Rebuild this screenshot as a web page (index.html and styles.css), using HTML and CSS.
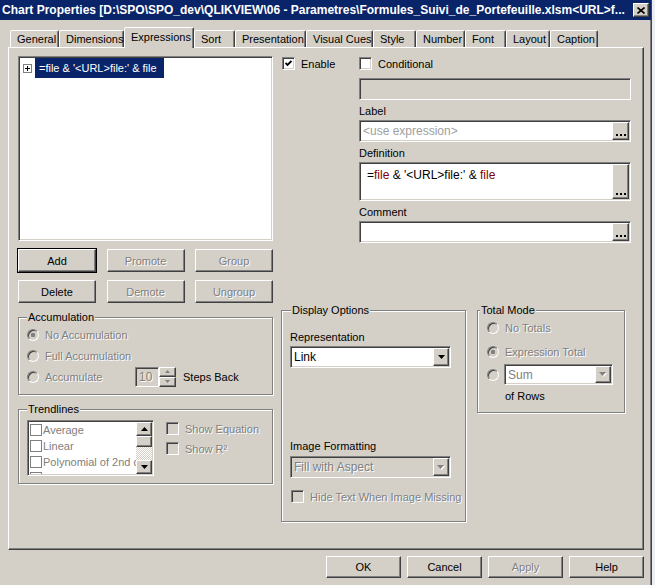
FILE: index.html
```html
<!DOCTYPE html>
<html lang="en">
<head>
  <meta charset="UTF-8" />
  <title>Chart Properties</title>
  <link rel="stylesheet" href="styles.css">
</head>
<body>

  <div class="dialog">
    <div class="titlebar">
      <span class="title">Chart Properties [D:\SPO\SPO_dev\QLIKVIEW\06 - Parametres\Formules_Suivi_de_Portefeuille.xlsm&lt;URL&gt;f...</span>
      <span class="close">
        <svg width="8" height="7" viewBox="0 0 8 7"><path d="M0.5 0.5L7.5 6.5M7.5 0.5L0.5 6.5" stroke="#000" stroke-width="1.6"/></svg>
      </span>
    </div>

    <div class="tabs">
      <div class="tab" style="width:49px">General</div>
      <div class="tab" style="width:65px">Dimensions</div>
      <div class="tab active" style="width:70px">Expressions</div>
      <div class="tab" style="width:41px">Sort</div>
      <div class="tab" style="width:71px">Presentation</div>
      <div class="tab" style="width:67px">Visual Cues</div>
      <div class="tab" style="width:43px">Style</div>
      <div class="tab" style="width:49px">Number</div>
      <div class="tab" style="width:41px">Font</div>
      <div class="tab" style="width:44px">Layout</div>
      <div class="tab" style="width:48px">Caption</div>
    </div>

    <div class="panel">
      <div class="left">
        <div class="tree sunken">
          <div class="tree-row">
            <span class="expander">
              <svg width="7" height="7" viewBox="0 0 7 7"><path d="M1 3.5H6M3.5 1V6" stroke="#000" stroke-width="1"/></svg>
            </span>
            <span class="tree-sel">=file &amp; '&lt;URL&gt;file:' &amp; file</span>
          </div>
        </div>

        <div class="btn-row">
          <button class="btn default">Add</button>
          <button class="btn" disabled>Promote</button>
          <button class="btn" disabled>Group</button>
        </div>
        <div class="btn-row">
          <button class="btn">Delete</button>
          <button class="btn" disabled>Demote</button>
          <button class="btn" disabled>Ungroup</button>
        </div>

        <div class="group accum">
          <div class="group-title">Accumulation</div>
          <div class="radio-row"><span class="radio off dot"></span><span class="dis">No Accumulation</span></div>
          <div class="radio-row"><span class="radio off"></span><span class="dis">Full Accumulation</span></div>
          <div class="radio-row">
            <span class="accum-label"><span class="radio off"></span><span class="dis">Accumulate</span></span>
            <span class="spin">
              <span class="spin-field sunken dis">10</span>
              <span class="spin-btns">
                <span class="spin-btn"><svg width="5" height="3" viewBox="0 0 5 3"><path d="M2.5 0L5 3H0z" fill="#808080"/></svg></span>
                <span class="spin-btn"><svg width="5" height="3" viewBox="0 0 5 3"><path d="M0 0H5L2.5 3z" fill="#808080"/></svg></span>
              </span>
            </span>
            <span class="steps">Steps Back</span>
          </div>
        </div>

        <div class="group trend">
          <div class="group-title">Trendlines</div>
          <div class="trend-body">
            <div class="tlist sunken">
              <div class="tl-items">
                <div class="tl-item"><span class="flatbox"></span>Average</div>
                <div class="tl-item"><span class="flatbox"></span>Linear</div>
                <div class="tl-item"><span class="flatbox"></span>Polynomial of 2nd degree</div>
                <div class="tl-item"><span class="flatbox"></span>Polynomial of 3rd degree</div>
              </div>
              <div class="scrollbar">
                <span class="sb-btn"><svg width="7" height="4" viewBox="0 0 7 4"><path d="M3.5 0L7 4H0z"/></svg></span>
                <span class="sb-thumb"></span>
                <span class="sb-track"></span>
                <span class="sb-btn"><svg width="7" height="4" viewBox="0 0 7 4"><path d="M0 0H7L3.5 4z"/></svg></span>
              </div>
            </div>
            <div class="trend-checks">
              <div class="check-row"><span class="box off"></span><span class="dis">Show Equation</span></div>
              <div class="check-row"><span class="box off"></span><span class="dis">Show R²</span></div>
            </div>
          </div>
        </div>
      </div>

      <div class="right">
        <div class="expr-top">
          <div class="enable-col">
            <div class="check-row">
              <span class="box"><svg width="7" height="7" viewBox="0 0 7 7"><path d="M0.5 3L2.5 5L6.5 1" stroke="#000" stroke-width="1.8" fill="none"/></svg></span>
              <span>Enable</span>
            </div>
          </div>
          <div class="fields">
            <div class="check-row"><span class="box"></span><span>Conditional</span></div>
            <div class="field sunken off cond"></div>
            <div class="caption">Label</div>
            <div class="field sunken">
              <span class="field-text placeholder">&lt;use expression&gt;</span>
              <span class="dots"><svg width="10" height="2" viewBox="0 0 10 2"><path d="M0 0h2v2H0zM4 0h2v2H4zM8 0h2v2H8z"/></svg></span>
            </div>
            <div class="caption">Definition</div>
            <div class="field sunken tall">
              <span class="field-text def">=<span class="kw">file</span> &amp; '&lt;URL&gt;file:' &amp; <span class="kw">file</span></span>
              <span class="dots"><svg width="10" height="2" viewBox="0 0 10 2"><path d="M0 0h2v2H0zM4 0h2v2H4zM8 0h2v2H8z"/></svg></span>
            </div>
            <div class="caption">Comment</div>
            <div class="field sunken">
              <span class="field-text"></span>
              <span class="dots"><svg width="10" height="2" viewBox="0 0 10 2"><path d="M0 0h2v2H0zM4 0h2v2H4zM8 0h2v2H8z"/></svg></span>
            </div>
          </div>
        </div>

        <div class="options">
          <div class="group display">
            <div class="group-title">Display Options</div>
            <div class="caption rep">Representation</div>
            <div class="combo sunken">
              <span class="combo-text">Link</span>
              <span class="combo-btn"><svg width="7" height="4" viewBox="0 0 7 4"><path d="M0 0H7L3.5 4z"/></svg></span>
            </div>
            <div class="caption img">Image Formatting</div>
            <div class="combo sunken off">
              <span class="combo-text dis">Fill with Aspect</span>
              <span class="combo-btn"><svg width="8" height="5" viewBox="0 0 8 5"><path d="M1 1H8L4.5 5z" fill="#fff"/><path d="M0 0H7L3.5 4z" fill="#808080"/></svg></span>
            </div>
            <div class="check-row hide-text"><span class="box off"></span><span class="dis">Hide Text When Image Missing</span></div>
          </div>

          <div class="group totals">
            <div class="group-title">Total Mode</div>
            <div class="radio-row small first"><span class="radio off"></span><span class="dis">No Totals</span></div>
            <div class="radio-row small second"><span class="radio off dot"></span><span class="dis">Expression Total</span></div>
            <div class="radio-row third">
              <span class="radio off"></span>
              <div class="combo sunken sum">
                <span class="combo-text dis">Sum</span>
                <span class="combo-btn"><svg width="8" height="5" viewBox="0 0 8 5"><path d="M1 1H8L4.5 5z" fill="#fff"/><path d="M0 0H7L3.5 4z" fill="#808080"/></svg></span>
              </div>
            </div>
            <div class="of-rows">of Rows</div>
          </div>
        </div>
      </div>
    </div>

    <div class="footer">
      <button class="btn wide">OK</button>
      <button class="btn wide">Cancel</button>
      <button class="btn wide" disabled>Apply</button>
      <button class="btn wide">Help</button>
    </div>
  </div>

</body>
</html>
```

FILE: styles.css
```css
* {
  box-sizing: border-box;
}
body {
  margin: 0;
  background: #eceef2;
  font-family: "Liberation Sans", Arial, sans-serif;
  font-size: 11px;
  color: #000;
}
.dialog {
  width: 652px;
  height: 585px;
  background: #d4d0c8;
  border-right: 1px solid #404040;
  box-shadow: inset -1px 0 #808080;
  overflow: hidden;
}

/* title bar */
.titlebar {
  height: 20px;
  background: #0a246a;
  display: flex;
  align-items: center;
  justify-content: space-between;
  padding: 0 2px 0 2px;
}
.title {
  color: #fff;
  font-weight: bold;
  font-size: 12px;
  white-space: nowrap;
  overflow: hidden;
}
.close {
  flex: none;
  width: 16px;
  height: 14px;
  margin-left: 6px;
  background: #d4d0c8;
  border: 1px solid;
  border-color: #fff #404040 #404040 #fff;
  box-shadow: inset -1px -1px #808080;
  display: flex;
  align-items: center;
  justify-content: center;
}

/* common 3d looks */
.sunken {
  border: 1px solid;
  border-color: #808080 #fff #fff #808080;
  box-shadow: inset 1px 1px #404040, inset -1px -1px #d4d0c8;
  background: #fff;
  padding: 1px;
}
.off {
  background-color: #d4d0c8;
}
.dis {
  color: #808080;
  text-shadow: 1px 1px 0 #fff;
}
.btn {
  width: 78px;
  height: 23px;
  padding: 0;
  font-family: "Liberation Sans", Arial, sans-serif;
  font-size: 11px;
  font-weight: normal;
  color: #000;
  background: #d4d0c8;
  border: 1px solid;
  border-color: #fff #404040 #404040 #fff;
  box-shadow: inset -1px -1px #808080;
}
.btn:disabled {
  color: #808080;
  text-shadow: 1px 1px 0 #fff;
}
.btn.default {
  outline: 1px solid #000;
}

/* tabs */
.tabs {
  display: flex;
  align-items: flex-end;
  height: 20px;
  margin-top: 7px;
  padding-left: 10px;
  position: relative;
  z-index: 1;
}
.tab {
  flex: none;
  height: 17px;
  padding: 2px 0 0 6px;
  line-height: 13px;
  border: 1px solid;
  border-bottom: none;
  border-color: #fff #404040 transparent #fff;
  box-shadow: inset -1px 0 #808080;
  border-radius: 2px 2px 0 0;
  background: #d4d0c8;
  white-space: nowrap;
}
.tab.active {
  height: 21px;
  margin-bottom: -1px;
  padding-top: 3px;
}

/* panel */
.panel {
  width: 636px;
  height: 503px;
  margin-left: 8px;
  padding-left: 9px;
  display: flex;
  gap: 8px;
  border: 1px solid;
  border-color: #fff #404040 #404040 #fff;
  box-shadow: inset -1px -1px #808080;
}
.left {
  width: 255px;
}

.tree {
  height: 185px;
  margin-top: 8px;
  padding: 1px 0 0 4px;
}
.tree-row {
  display: flex;
  align-items: center;
  height: 20px;
}
.expander {
  width: 9px;
  height: 9px;
  margin-right: 3px;
  border: 1px solid #808080;
  background: #fff;
  display: flex;
  align-items: center;
  justify-content: center;
}
.tree-sel {
  height: 20px;
  line-height: 20px;
  padding: 0 7px 0 4px;
  background: #0a246a;
  color: #fff;
}

.btn-row {
  display: flex;
  justify-content: space-between;
  margin-top: 8px;
}

/* group boxes */
.group {
  border: 1px solid #808080;
  box-shadow: inset 1px 1px #fff, 1px 1px #fff;
  padding: 0 8px;
}
.group-title {
  width: fit-content;
  height: 14px;
  line-height: 14px;
  margin: -8px 0 0 0;
  padding: 0 1px;
  background: #d4d0c8;
}
.accum {
  height: 78px;
  margin-top: 14px;
}
.accum .radio-row:first-of-type {
  margin-top: 3px;
}
.radio-row {
  display: flex;
  align-items: center;
  gap: 6px;
  height: 21px;
  white-space: nowrap;
}
.radio {
  flex: none;
  width: 12px;
  height: 12px;
  border-radius: 50%;
  border: 1px solid;
  border-color: #808080 #fff #fff #808080;
  box-shadow: inset 1px 1px #404040, inset -1px -1px #d4d0c8;
  background: #fff;
}
.radio.off {
  background: #d4d0c8;
}
.radio.dot {
  background: radial-gradient(circle, #808080 0 2px, #d4d0c8 2.5px);
}
.accum-label {
  width: 102px;
  display: flex;
  align-items: center;
  gap: 6px;
}
.spin {
  display: flex;
  height: 20px;
}
.spin-field {
  width: 24px;
  background: #d4d0c8;
  padding: 2px 0 0 3px;
  font-size: 12px;
}
.spin-btns {
  display: flex;
  flex-direction: column;
  width: 17px;
}
.spin-btn {
  flex: 1;
  display: flex;
  align-items: center;
  justify-content: center;
  border: 1px solid;
  border-color: #fff #404040 #404040 #fff;
  box-shadow: inset -1px -1px #808080;
}
.steps {
  margin-left: 1px;
}

.trend {
  height: 75px;
  margin-top: 14px;
}
.trend-body {
  display: flex;
  margin-top: 4px;
}
.tlist {
  width: 127px;
  height: 56px;
  display: flex;
  overflow: hidden;
}
.tl-items {
  flex: 1;
  overflow: hidden;
  white-space: nowrap;
}
.tl-item {
  display: flex;
  align-items: center;
  height: 16px;
  color: #808080;
}
.flatbox {
  flex: none;
  width: 12px;
  height: 12px;
  margin: 0 1px 0 1px;
  border: 1px solid #808080;
}
.scrollbar {
  width: 16px;
  display: flex;
  flex-direction: column;
  flex: none;
}
.sb-btn,
.sb-thumb {
  display: flex;
  align-items: center;
  justify-content: center;
  background: #d4d0c8;
  border: 1px solid;
  border-color: #fff #404040 #404040 #fff;
  box-shadow: inset -1px -1px #808080;
}
.sb-btn {
  height: 14px;
}
.sb-thumb {
  height: 11px;
}
.sb-track {
  flex: 1;
  background: repeating-conic-gradient(#fff 0 25%, #d4d0c8 0 50%) 0 0 / 2px 2px;
}
.trend-checks {
  margin-left: 12px;
  padding-top: 2px;
}
.check-row {
  display: flex;
  align-items: center;
  gap: 6px;
  height: 13px;
  white-space: nowrap;
}
.trend-checks .check-row + .check-row {
  margin-top: 7px;
}
.box {
  flex: none;
  width: 13px;
  height: 13px;
  border: 1px solid;
  border-color: #808080 #fff #fff #808080;
  box-shadow: inset 1px 1px #404040, inset -1px -1px #d4d0c8;
  background: #fff;
  display: flex;
  align-items: center;
  justify-content: center;
}
.box.off {
  background: #d4d0c8;
}

/* right side */
.right {
  width: 350px;
}
.expr-top {
  display: flex;
  margin-top: 9px;
}
.enable-col {
  width: 78px;
  padding-left: 1px;
}
.fields {
  width: 272px;
}
.field {
  display: flex;
  height: 22px;
}
.field.cond {
  margin-top: 8px;
}
.field.tall {
  height: 39px;
}
.field-text {
  flex: 1;
  padding: 2px 0 0 2px;
  font-size: 12px;
  white-space: nowrap;
}
.placeholder {
  color: #a0a0a0;
}
.def {
  padding: 4px 0 0 6px;
}
.kw {
  color: #800000;
}
.dots {
  flex: none;
  width: 17px;
  display: flex;
  align-items: flex-end;
  justify-content: center;
  padding-bottom: 3px;
  background: #d4d0c8;
  border: 1px solid;
  border-color: #fff #404040 #404040 #fff;
  box-shadow: inset -1px -1px #808080;
}
.caption {
  height: 14px;
  line-height: 14px;
  margin: 4px 0 2px;
}

.options {
  display: flex;
  margin-top: 67px;
}
.display {
  width: 185px;
  height: 212px;
}
.display .group-title {
  margin-left: 1px;
}
.caption.rep {
  margin-top: 13px;
}
.caption.img {
  margin-top: 71px;
  margin-bottom: 3px;
}
.combo {
  display: flex;
  width: 161px;
  height: 22px;
}
.combo-text {
  flex: 1;
  padding: 2px 0 0 2px;
  font-size: 12px;
}
.combo-btn {
  flex: none;
  width: 16px;
  display: flex;
  align-items: center;
  justify-content: center;
  background: #d4d0c8;
  border: 1px solid;
  border-color: #fff #404040 #404040 #fff;
  box-shadow: inset -1px -1px #808080;
}
.hide-text {
  margin-top: 12px;
  padding-left: 1px;
}

.totals {
  width: 148px;
  height: 103px;
  margin-left: 11px;
  padding-left: 9px;
}
.totals .group-title {
  margin-left: -7px;
}
.radio-row.small {
  height: 14px;
}
.radio-row.first {
  margin-top: 4px;
}
.radio-row.second {
  margin-top: 10px;
}
.radio-row.third {
  margin-top: 5px;
  gap: 5px;
}
.combo.sum {
  width: 109px;
  height: 21px;
}
.of-rows {
  height: 14px;
  line-height: 14px;
  margin-top: 4px;
  padding-left: 18px;
}

/* bottom buttons */
.footer {
  display: flex;
  justify-content: flex-end;
  gap: 6px;
  margin-top: 6px;
  padding-right: 7px;
}
.btn.wide {
  width: 75px;
  height: 22px;
}
```
